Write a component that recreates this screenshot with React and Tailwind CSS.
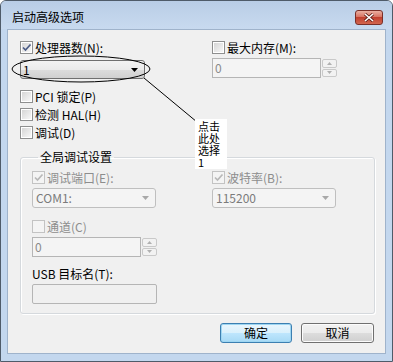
import React from 'react';

const font = "font-['Noto_Sans_CJK_SC',sans-serif]";

function Check({ checked, disabled }) {
  return (
    <span
      className={`w-[13px] h-[13px] shrink-0 border flex items-center justify-center ${
        disabled ? 'border-[#c3c3c3] bg-[#f4f4f4]' : 'border-[#8e8f8f] bg-white'
      }`}
    >
      <span
        className={`w-[9px] h-[9px] relative ${
          disabled ? 'bg-[#f4f4f4]' : 'bg-gradient-to-br from-[#d6d6d6] to-[#f7f7f7]'
        }`}
      >
        {checked && (
          <svg width="11" height="11" viewBox="0 0 11 11" className="absolute -left-[1px] -top-[1px]">
            <path
              d="M2 5.5 L4.5 8 L9.5 2.5"
              fill="none"
              stroke={disabled ? '#b8b8b8' : '#4c5c86'}
              strokeWidth="1.7"
            />
          </svg>
        )}
      </span>
    </span>
  );
}

function CheckRow({ checked, disabled, children }) {
  return (
    <div className="flex items-center h-[13px] gap-[2px]">
      <Check checked={checked} disabled={disabled} />
      <span className={`text-[12px] leading-[12px] whitespace-nowrap ${disabled ? 'text-[#8d8d8d]' : 'text-black'}`}>
        {children}
      </span>
    </div>
  );
}

function Arrow({ color }) {
  return (
    <svg width="7" height="4" viewBox="0 0 7 4">
      <path d="M0 0 H7 L3.5 4 Z" fill={color} />
    </svg>
  );
}

function Dropdown({ value }) {
  return (
    <div className="w-[125px] h-[19px] border border-[#707070] rounded-[3px] bg-[linear-gradient(#f3f3f3,#ebebeb_50%,#dddddd_50%,#d0d0d0)] flex items-center justify-between pl-[2px] pr-[6px]">
      <span className="text-[12px] leading-[12px] text-black">{value}</span>
      <Arrow color="#000" />
    </div>
  );
}

function DisabledCombo({ value }) {
  return (
    <div className="w-[124px] h-[20px] border border-[#bfbfbf] rounded-[3px] bg-[#f4f4f4] flex items-center justify-between pl-[3px] pr-[6px]">
      <span className="text-[12px] leading-[12px] text-[#7b7b7b]">{value}</span>
      <Arrow color="#a8a8a8" />
    </div>
  );
}

function Spin() {
  return (
    <div className="w-[125px] h-[20px] flex">
      <div className="flex-1 border border-[#b5b5b5] bg-[#f4f4f4] flex items-center pl-[2px]">
        <span className="text-[12px] leading-[12px] text-[#8a8a8a]">0</span>
      </div>
      <div className="w-[16px] flex flex-col gap-[1px] py-[1px] pl-[1px]">
        <div className="flex-1 border border-[#c9c9c9] rounded-[2px] bg-[#f2f2f2] flex items-center justify-center">
          <svg width="5" height="3" viewBox="0 0 5 3"><path d="M0 3 H5 L2.5 0 Z" fill="#b0b0b0" /></svg>
        </div>
        <div className="flex-1 border border-[#c9c9c9] rounded-[2px] bg-[#f2f2f2] flex items-center justify-center">
          <svg width="5" height="3" viewBox="0 0 5 3"><path d="M0 0 H5 L2.5 3 Z" fill="#b0b0b0" /></svg>
        </div>
      </div>
    </div>
  );
}

export default function App() {
  return (
    <div className={`${font} relative w-[393px] h-[362px] bg-[#c3d7ee] border border-[#4f5b69] rounded-t-[6px] flex flex-col overflow-hidden`}>
      {/* title bar */}
      <div className="h-[28px] shrink-0 flex items-start justify-between pl-[11px] pr-[9px] bg-gradient-to-b from-[#b9cde6] to-[#c8daef]">
        <span className="mt-[10px] text-[12px] leading-[12px] text-black">启动高级选项</span>
        <button className="mt-[9px] w-[28px] h-[15px] rounded-[3px] border border-[#7a2f28] bg-[linear-gradient(#eab0a2,#d66d5c_50%,#c1402f_50%,#d2664f)] flex items-center justify-center">
          <svg width="12" height="9" viewBox="0 0 12 9">
            <path d="M2 1 L10 8 M10 1 L2 8" stroke="#5b1e18" strokeWidth="3" />
            <path d="M2 1 L10 8 M10 1 L2 8" stroke="#fff" strokeWidth="1.6" />
          </svg>
        </button>
      </div>

      {/* client area */}
      <div className="mx-[6px] mb-[7px] flex-1 border border-[#9fb3cb] bg-[#f0f0f0] flex flex-col pl-[12px] pr-[10px] pt-[11px]">
        <div className="grid grid-cols-[192px_1fr]">
          <div className="flex flex-col">
            <CheckRow checked>处理器数(N):</CheckRow>
            <div className="mt-[6px]">
              <Dropdown value="1" />
            </div>
            <div className="mt-[11px] flex flex-col gap-[5px]">
              <CheckRow>PCI 锁定(P)</CheckRow>
              <CheckRow>检测 HAL(H)</CheckRow>
              <CheckRow>调试(D)</CheckRow>
            </div>
          </div>
          <div className="flex flex-col">
            <CheckRow>最大内存(M):</CheckRow>
            <div className="mt-[4px]">
              <Spin />
            </div>
          </div>
        </div>

        <fieldset className="mt-[12px] border border-[#d5d9dd] rounded-[3px] shadow-[inset_1px_1px_0_#ffffff,1px_1px_0_#ffffff] pl-[11px] pt-[8px] pb-[9px]">
          <legend className="ml-[6px] px-[2px] text-[12px] leading-[12px] text-black">全局调试设置</legend>
          <div className="grid grid-cols-[180px_1fr]">
            <div className="flex flex-col">
              <CheckRow checked disabled>调试端口(E):</CheckRow>
              <div className="mt-[4px]">
                <DisabledCombo value="COM1:" />
              </div>
              <div className="mt-[12px]">
                <CheckRow disabled>通道(C)</CheckRow>
              </div>
              <div className="mt-[4px]">
                <Spin />
              </div>
              <span className="mt-[11px] text-[12px] leading-[12px] text-black">USB 目标名(T):</span>
              <div className="mt-[4px] w-[125px] h-[20px] border border-[#b5b5b5] rounded-[2px] bg-[#f0f0f0]" />
            </div>
            <div className="flex flex-col">
              <CheckRow checked disabled>波特率(B):</CheckRow>
              <div className="mt-[4px]">
                <DisabledCombo value="115200" />
              </div>
            </div>
          </div>
        </fieldset>

        <div className="mt-[9px] flex justify-end gap-[9px] pr-[1px]">
          <button className="w-[72px] h-[20px] rounded-[3px] border border-[#3c7fb1] bg-[linear-gradient(#eaf6fd,#d9f0fc_50%,#bee6fd_50%,#a7d9f5)] shadow-[inset_0_0_0_1px_#9ed6f2] text-[12px] leading-[12px] text-black">
            确定
          </button>
          <button className="w-[73px] h-[20px] rounded-[3px] border border-[#707070] bg-[linear-gradient(#f2f2f2,#ebebeb_50%,#dddddd_50%,#cfcfcf)] shadow-[inset_0_0_0_1px_#fcfcfc] text-[12px] leading-[12px] text-black">
            取消
          </button>
        </div>
      </div>

      {/* annotation overlay */}
      <svg className="absolute left-0 top-0 pointer-events-none" width="393" height="362" viewBox="0 0 393 362">
        <ellipse cx="80" cy="68" rx="69" ry="13" fill="none" stroke="#000" strokeWidth="1" />
        <line x1="143" y1="77" x2="196" y2="121" stroke="#000" strokeWidth="1" />
      </svg>
      <div className="absolute left-[194px] top-[118px] w-[32px] bg-white px-[3px] pt-[1px] pb-[1px] flex flex-col text-[11px] leading-[12px] text-black">
        <span className="h-[12px]">点击</span>
        <span className="h-[12px]">此处</span>
        <span className="h-[12px]">选择</span>
        <span className="h-[12px]">1</span>
      </div>
    </div>
  );
}
